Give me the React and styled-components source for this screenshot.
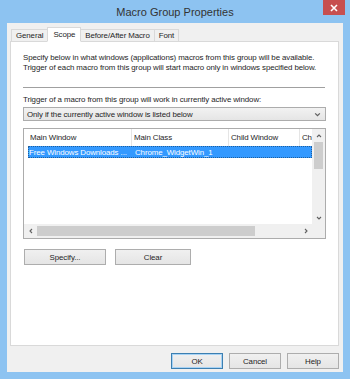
import React from 'react';
import styled, { createGlobalStyle } from 'styled-components';

const GlobalStyle = createGlobalStyle`
  html, body {
    margin: 0;
    padding: 0;
    background: #8ec3f0;
  }
  * {
    box-sizing: border-box;
  }
`;

const Frame = styled.div`
  width: 350px;
  height: 379px;
  background: #8dc3f1;
  display: flex;
  flex-direction: column;
  font-family: "Liberation Sans", Arial, sans-serif;
  font-size: 7.9px;
  letter-spacing: -0.1px;
  color: #1e1e1e;
  overflow: hidden;
`;

const TitleBar = styled.div`
  height: 23px;
  display: grid;
  grid-template-columns: 1fr auto;
  align-items: start;
  padding-right: 5px;
`;

const Title = styled.div`
  padding-left: 27px;
  line-height: 24px;
  text-align: center;
  font-size: 11px;
  letter-spacing: 0;
  color: #333;
`;

const CloseButton = styled.div`
  width: 22px;
  height: 15px;
  background: #c74f4f;
  display: flex;
  align-items: center;
  justify-content: center;
`;

const Client = styled.div`
  flex: 1;
  margin: 0 7px 7px 7px;
  background: #f0f0f0;
  display: flex;
  flex-direction: column;
  padding: 4px 4px 0 3px;
`;

const TabStrip = styled.div`
  display: flex;
  align-items: flex-end;
  height: 15px;
  padding-left: 1px;
  position: relative;
  z-index: 1;
`;

const Tab = styled.div`
  height: ${p => (p.$active ? '15px' : '13px')};
  padding: 0 ${p => (p.$active ? '5px' : '4px')};
  display: flex;
  align-items: center;
  border: 1px solid #d9d9d9;
  border-bottom: ${p => (p.$active ? '1px solid #fff' : '1px solid #d9d9d9')};
  background: ${p => (p.$active ? '#ffffff' : '#f0f0f0')};
  margin-left: -1px;
  z-index: ${p => (p.$active ? 2 : 0)};
  &:first-child {
    margin-left: 0;
  }
`;

const Panel = styled.div`
  height: 305px;
  margin-top: -1px;
  background: #ffffff;
  border: 1px solid #d9d9d9;
  padding: 11px 12px 0 12px;
  display: flex;
  flex-direction: column;
`;

const Para = styled.p`
  margin: 0;
  line-height: 9.5px;
  white-space: nowrap;
`;

const Separator = styled.div`
  height: 1px;
  background: #a0a0a0;
  margin: 15px 1px 0 0;
`;

const Label = styled.div`
  margin-top: 7px;
  line-height: 9px;
`;

const Select = styled.div`
  margin-top: 3px;
  height: 14px;
  border: 1px solid #acacac;
  background: linear-gradient(#f2f2f2, #e5e5e5);
  display: flex;
  align-items: center;
  justify-content: space-between;
  padding: 0 4px 0 3px;
`;

const ListView = styled.div`
  margin-top: 7px;
  height: 111px;
  border: 1px solid #acacac;
  display: grid;
  grid-template-columns: 1fr 13px;
  grid-template-rows: 1fr 14px;
`;

const ListBody = styled.div`
  overflow: hidden;
  padding: 0 0 0 4px;
`;

const HeaderRow = styled.div`
  display: grid;
  grid-template-columns: 104px 97px 71px 20px;
  height: 17px;
  margin-left: -4px;
  padding-left: 4px;
  background: #fff;
`;

const HeaderCell = styled.div`
  display: flex;
  align-items: center;
  padding-left: 2px;
  border-right: 1px solid #e5e5e5;
  white-space: nowrap;
  overflow: hidden;
  &:last-child {
    border-right: none;
  }
`;

const Row = styled.div`
  display: grid;
  grid-template-columns: 104px 1fr;
  height: 12px;
  background: ${p => (p.$selected ? '#3399ff' : 'transparent')};
  color: ${p => (p.$selected ? '#fff' : '#1e1e1e')};
  outline: ${p => (p.$selected ? '1px dotted #1e5fa0' : 'none')};
  outline-offset: -1px;
`;

const Cell = styled.div`
  display: flex;
  align-items: center;
  padding-left: ${p => p.$pad || 1}px;
  white-space: nowrap;
  overflow: hidden;
`;

const VScroll = styled.div`
  background: #f0f0f0;
  display: flex;
  flex-direction: column;
  align-items: center;
`;

const ArrowBox = styled.div`
  width: 13px;
  height: 13px;
  display: flex;
  align-items: center;
  justify-content: center;
  flex-shrink: 0;
`;

const VThumb = styled.div`
  width: 9px;
  height: 27px;
  background: #cdcdcd;
`;

const Spacer = styled.div`
  flex: 1;
`;

const HScroll = styled.div`
  background: #f0f0f0;
  display: flex;
  align-items: center;
`;

const HThumb = styled.div`
  width: 218px;
  height: 10px;
  background: #cdcdcd;
`;

const Corner = styled.div`
  background: #f0f0f0;
`;

const ButtonRow = styled.div`
  display: flex;
  gap: ${p => p.$gap || 8}px;
  justify-content: ${p => (p.$end ? 'flex-end' : 'flex-start')};
  margin-top: ${p => p.$top || 0}px;
  padding-left: ${p => p.$left || 0}px;
`;

const Button = styled.div`
  width: ${p => p.$w || 52}px;
  height: 16px;
  border: 1px solid ${p => (p.$default ? '#3c7fb1' : '#adadad')};
  background: linear-gradient(#f0f0f0, #e5e5e5);
  box-shadow: ${p => (p.$default ? 'inset 0 0 0 1px #a8d3f5' : 'none')};
  display: flex;
  align-items: center;
  justify-content: center;
`;

const Chevron = ({ dir = 'down', size = 6 }) => {
  const paths = {
    down: 'M1 2 L3 4 L5 2',
    up: 'M1 4 L3 2 L5 4',
    left: 'M4 1 L2 3 L4 5',
    right: 'M2 1 L4 3 L2 5',
  };
  return (
    <svg width={size} height={size} viewBox="0 0 6 6">
      <path d={paths[dir]} fill="none" stroke="#606060" strokeWidth="1.1" />
    </svg>
  );
};

const CloseIcon = () => (
  <svg width="8" height="8" viewBox="0 0 8 8">
    <path d="M1 1 L7 7 M7 1 L1 7" stroke="#fff" strokeWidth="1.6" />
  </svg>
);

export default function App() {
  return (
    <>
      <GlobalStyle />
      <Frame>
        <TitleBar>
          <Title>Macro Group Properties</Title>
          <CloseButton>
            <CloseIcon />
          </CloseButton>
        </TitleBar>
        <Client>
          <TabStrip>
            <Tab>General</Tab>
            <Tab $active>Scope</Tab>
            <Tab>Before/After Macro</Tab>
            <Tab>Font</Tab>
          </TabStrip>
          <Panel>
            <Para>Specify below in what windows (applications) macros from this group will be available.</Para>
            <Para>Trigger of each macro from this group will start macro only in windows specified below.</Para>
            <Separator />
            <Label>Trigger of a macro from this group will work in currently active window:</Label>
            <Select>
              <span>Only if the currently active window is listed below</span>
              <Chevron dir="down" size={7} />
            </Select>
            <ListView>
              <ListBody>
                <HeaderRow>
                  <HeaderCell>Main Window</HeaderCell>
                  <HeaderCell>Main Class</HeaderCell>
                  <HeaderCell>Child Window</HeaderCell>
                  <HeaderCell>Ch</HeaderCell>
                </HeaderRow>
                <Row $selected>
                  <Cell>Free Windows Downloads ...</Cell>
                  <Cell $pad={3}>Chrome_WidgetWin_1</Cell>
                </Row>
              </ListBody>
              <VScroll>
                <ArrowBox>
                  <Chevron dir="up" />
                </ArrowBox>
                <VThumb />
                <Spacer />
                <ArrowBox>
                  <Chevron dir="down" />
                </ArrowBox>
              </VScroll>
              <HScroll>
                <ArrowBox>
                  <Chevron dir="left" />
                </ArrowBox>
                <HThumb />
                <Spacer />
                <ArrowBox>
                  <Chevron dir="right" />
                </ArrowBox>
              </HScroll>
              <Corner />
            </ListView>
            <ButtonRow $top={10} $gap={9} $left={1}>
              <Button $w={82}>Specify...</Button>
              <Button $w={76}>Clear</Button>
            </ButtonRow>
          </Panel>
          <ButtonRow $end $top={7} $gap={6}>
            <Button $default>OK</Button>
            <Button>Cancel</Button>
            <Button>Help</Button>
          </ButtonRow>
        </Client>
      </Frame>
    </>
  );
}
